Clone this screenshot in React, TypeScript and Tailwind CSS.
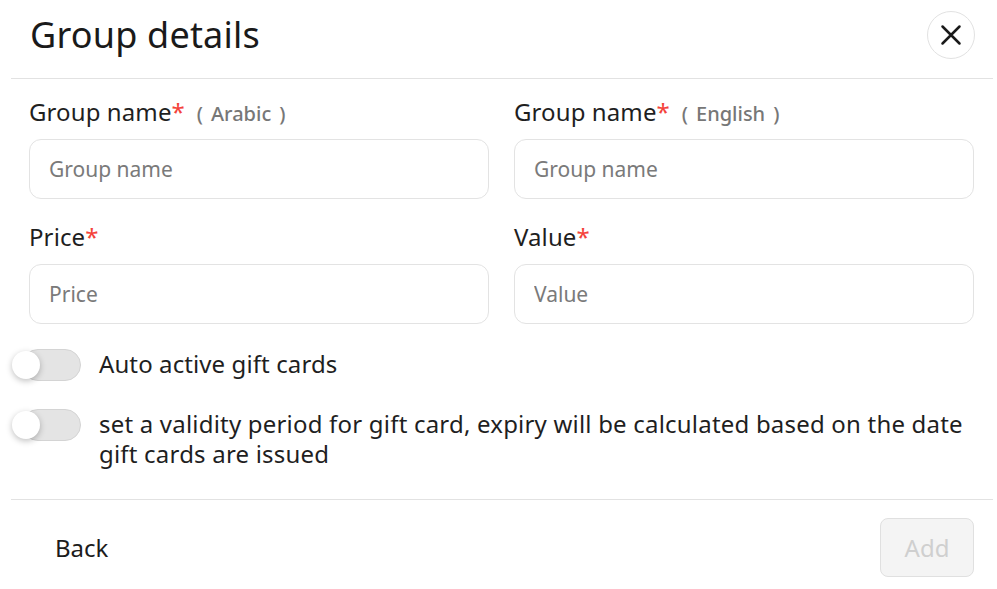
const font = { fontFamily: '"Noto Sans", "Open Sans", sans-serif' };

function Field({ label, hint, placeholder }: { label: string; hint?: string; placeholder: string }) {
  return (
    <div className="flex flex-col">
      <div className="flex items-baseline h-[30px] leading-[30px]">
        <span className="text-[24px] text-[#1f1f1f] tracking-[0.1px]">{label}</span>
        <span className="text-[24px] text-[#f4433b]">*</span>
        {hint && (
          <span className="ml-[12px] text-[20px] font-medium text-[#777777]">
            (<span className="mx-[8px]">{hint}</span>)
          </span>
        )}
      </div>
      <input
        placeholder={placeholder}
        className="mt-[12px] h-[60px] rounded-[12px] border border-[#e3e3e3] px-[19px] text-[21px] text-[#1f1f1f] placeholder:text-[#7a7a7a] outline-none"
        style={font}
      />
    </div>
  );
}

function Toggle() {
  return (
    <div className="relative w-[69px] h-[32px] shrink-0">
      <div className="absolute left-[10px] top-0 w-[59px] h-[32px] rounded-full bg-[#e4e4e4] border border-[#d4d4d4]" />
      <div className="absolute left-0 top-[2px] w-[28px] h-[28px] rounded-full bg-white shadow-[0_2px_6px_rgba(0,0,0,0.25)]" />
    </div>
  );
}

export default function App() {
  return (
    <div className="w-[997px] h-[589px] bg-white overflow-hidden" style={font}>
      {/* Header */}
      <div className="flex items-center justify-between h-[78px] pb-[8px] pl-[30px] pr-[22px]">
        <h1 className="text-[36px] text-[#1a1a1a] leading-none tracking-[0.2px]">Group details</h1>
        <button className="w-[48px] h-[48px] rounded-full border border-[#e2e2e2] flex items-center justify-center bg-white">
          <svg width="24" height="24" viewBox="0 0 24 24" fill="none" stroke="#1a1a1a" strokeWidth="2.5" strokeLinecap="round">
            <path d="M3.5 3.5L20.5 20.5M20.5 3.5L3.5 20.5" />
          </svg>
        </button>
      </div>
      <div className="ml-[11px] mr-[4px] h-px bg-[#e2e2e2]" />

      {/* Body */}
      <div className="pl-[29px] pr-[23px] pt-[18px]">
        <div className="grid grid-cols-2 gap-x-[25px] gap-y-[23px]">
          <Field label="Group name" hint="Arabic" placeholder="Group name" />
          <Field label="Group name" hint="English" placeholder="Group name" />
          <Field label="Price" placeholder="Price" />
          <Field label="Value" placeholder="Value" />
        </div>
      </div>

      {/* Switches */}
      <div className="pl-[12px] pr-[23px] pt-[25px] flex flex-col gap-[28px]">
        <div className="flex items-start gap-[18px]">
          <Toggle />
          <p className="text-[24px] leading-[30px] text-[#1f1f1f] tracking-[0.1px]">Auto active gift cards</p>
        </div>
        <div className="flex items-start gap-[18px]">
          <Toggle />
          <p className="text-[24px] leading-[30px] text-[#1f1f1f] tracking-[0.2px]">
            set a validity period for gift card, expiry will be calculated based on the date gift cards are issued
          </p>
        </div>
      </div>

      {/* Footer */}
      <div className="ml-[11px] mr-[4px] mt-[30px] h-px bg-[#e2e2e2]" />
      <div className="flex items-center justify-between pl-[55px] pr-[23px] pt-[18px]">
        <button className="text-[24px] text-[#1c1c1c]">Back</button>
        <button
          disabled
          className="w-[94px] h-[59px] rounded-[8px] border border-[#e0e0e0] bg-[#f4f4f4] text-[24px] text-[#cfcfcf]"
        >
          Add
        </button>
      </div>
    </div>
  );
}
